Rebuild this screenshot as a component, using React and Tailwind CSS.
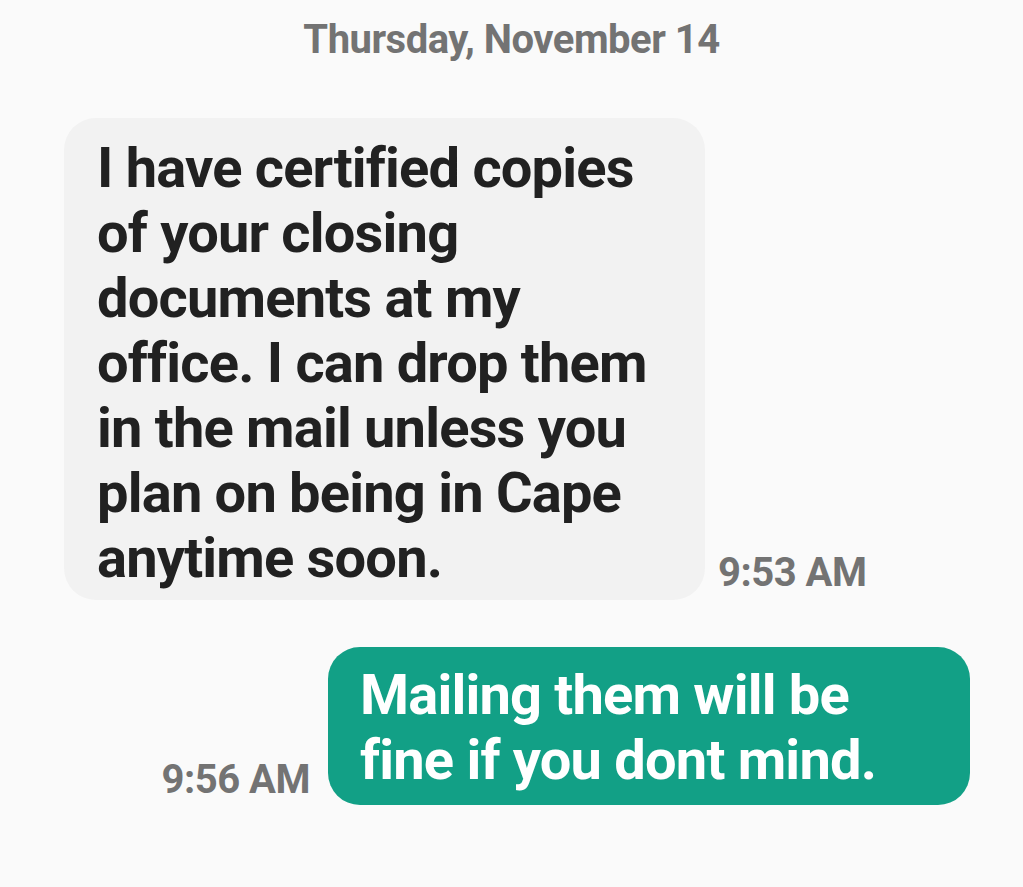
import React from "react";

export default function App() {
  return (
    <div
      className="w-[1023px] h-[887px] bg-[#fafafa] overflow-hidden"
      style={{ fontFamily: "Roboto, 'Noto Sans', sans-serif" }}
    >
      <div className="pt-[15px] text-center text-[40px] leading-[49px] font-bold text-[#737373] tracking-[-0.5px]">
        Thursday, November 14
      </div>

      <div className="mt-[54px] pl-[64px] flex items-end">
        <div className="w-[641px] rounded-[32px] bg-[#f2f2f2] pl-[33px] pr-[20px] pt-[18px] pb-[9px] text-[56px] leading-[65px] font-bold text-[#212121] tracking-[-0.8px]">
          I have certified copies of your closing documents at my office. I can drop them in the mail unless you plan on being in Cape anytime soon.
        </div>
        <div className="ml-[13px] mb-[3px] text-[40px] leading-[49px] font-bold text-[#737373] tracking-[-0.5px]">
          9:53 AM
        </div>
      </div>

      <div className="mt-[47px] flex items-end justify-end pr-[53px]">
        <div className="mr-[18px] mb-[1px] text-[40px] leading-[49px] font-bold text-[#737373] tracking-[-0.5px]">
          9:56 AM
        </div>
        <div className="w-[642px] rounded-[32px] bg-[#12a086] pl-[32px] pr-[20px] pt-[16px] pb-[12px] text-[56px] leading-[65px] font-bold text-white tracking-[-0.8px]">
          Mailing them will be fine if you dont mind.
        </div>
      </div>
    </div>
  );
}
